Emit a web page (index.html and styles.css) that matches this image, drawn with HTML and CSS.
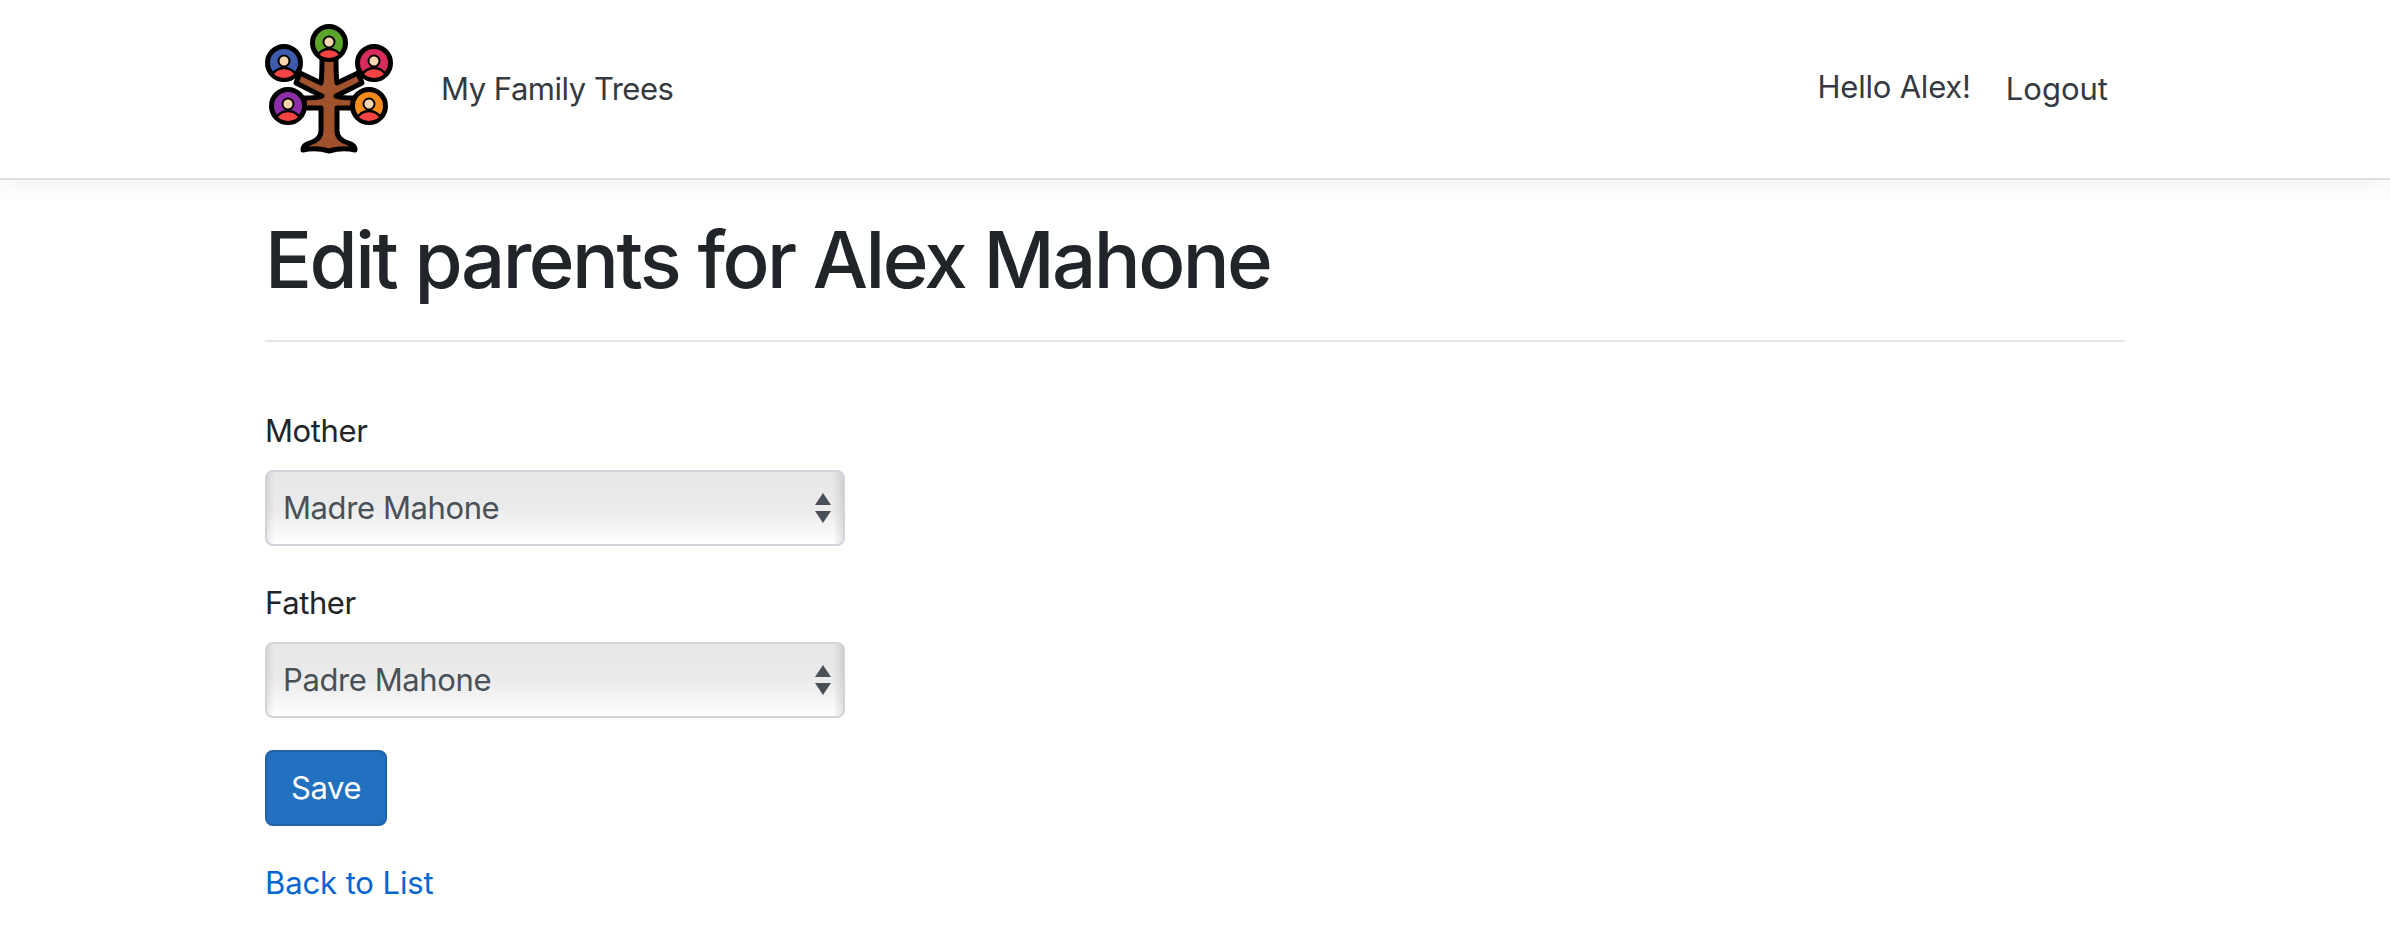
FILE: index.html
```html
<!DOCTYPE html>
<html lang="en">
<head>
<meta charset="utf-8">
<title>Edit parents</title>
<link rel="stylesheet" href="styles.css">
</head>
<body>
<header class="navbar">
  <div class="container nav-inner">
    <a class="brand-logo" href="#" aria-label="Home">
      <svg class="logo" viewBox="262 20 134 136" width="134" height="136">
        <defs>
          <clipPath id="c1"><circle cx="329" cy="42" r="15"/></clipPath>
          <clipPath id="c2"><circle cx="284" cy="62" r="15"/></clipPath>
          <clipPath id="c3"><circle cx="374" cy="62" r="15"/></clipPath>
          <clipPath id="c4"><circle cx="288" cy="105" r="15"/></clipPath>
          <clipPath id="c5"><circle cx="369" cy="105" r="15"/></clipPath>
          <path id="tree" d="M322 55C322 68 322 76 321 82L300 72L296 82L322 95C318 97 312 97 304 97V107H321V130C321 137 316 140 310 142C306 143 303 145 303 149C312 147 322 148 329 150C336 148 346 147 355 149C355 145 352 143 348 142C342 140 337 137 337 130V107H354V97C346 97 340 97 336 95L362 82L358 72L337 82C336 76 336 68 336 55Z"/>
          <g id="bust">
            <circle class="head" cx="0" cy="0" r="5.5"/>
            <path class="body" d="M-13 15C-10 10 -6 7 0 7C6 7 10 10 13 15C10 21 -10 21 -13 15Z"/>
          </g>
        </defs>
        <use href="#tree" class="tree"/>
        <circle class="ring" cx="329" cy="42" r="16.5" fill="#5ca52c"/>
        <circle class="ring" cx="284" cy="62" r="16.5" fill="#3f5bab"/>
        <circle class="ring" cx="374" cy="62" r="16.5" fill="#d72c5c"/>
        <circle class="ring" cx="288" cy="105" r="16.5" fill="#8e2fa8"/>
        <circle class="ring" cx="369" cy="105" r="16.5" fill="#f68c1e"/>
        <g clip-path="url(#c1)"><use href="#bust" x="329" y="41"/></g>
        <g clip-path="url(#c2)"><use href="#bust" x="284" y="60"/></g>
        <g clip-path="url(#c3)"><use href="#bust" x="374" y="60"/></g>
        <g clip-path="url(#c4)"><use href="#bust" x="288" y="103"/></g>
        <g clip-path="url(#c5)"><use href="#bust" x="369" y="103"/></g>
      </svg>
    </a>
    <a class="brand-text" href="#">My Family Trees</a>
    <div class="nav-right">
      <span class="hello">Hello Alex!</span>
      <a class="logout" href="#">Logout</a>
    </div>
  </div>
</header>
<main class="container main">
  <h1 class="title">Edit parents for Alex Mahone</h1>
  <hr class="rule">
  <form class="form">
    <div class="group">
      <label class="label" for="mother">Mother</label>
      <div class="select" id="mother"><span>Madre Mahone</span>
        <svg class="arrows" viewBox="0 0 16 30" width="16" height="30"><path d="M8 0L16 12H0Z"/><path d="M0 18H16L8 30Z"/></svg>
      </div>
    </div>
    <div class="group">
      <label class="label" for="father">Father</label>
      <div class="select" id="father"><span>Padre Mahone</span>
        <svg class="arrows" viewBox="0 0 16 30" width="16" height="30"><path d="M8 0L16 12H0Z"/><path d="M0 18H16L8 30Z"/></svg>
      </div>
    </div>
    <button class="save" type="button">Save</button>
  </form>
  <a class="back" href="#">Back to List</a>
</main>
</body>
</html>
```
FILE: styles.css
```css
* { box-sizing: border-box; }
html, body { margin: 0; height: 100%; overflow: hidden; }
body {
  background: #fff;
  color: #212529;
  font-family: Inter, "Liberation Sans", sans-serif;
  font-size: 31px;
  letter-spacing: -0.4px;
  line-height: 48px;
}
a { text-decoration: none; }
.container { width: 1860px; margin-left: 265px; }
.navbar {
  height: 180px;
  border-bottom: 2px solid #dfe0e4;
  box-shadow: 0 4px 24px rgba(0, 0, 0, 0.06);
}
.nav-inner { display: flex; align-items: center; height: 178px; }
.brand-logo { display: block; margin-left: -3px; height: 136px; }
.logo { display: block; }
.brand-text { margin-left: 45px; color: #343a40; letter-spacing: -0.48px; }
.nav-right { margin-left: auto; margin-right: 17px; display: flex; align-items: center; gap: 35px; color: #343a40; }
.hello { position: relative; top: -2px; letter-spacing: -0.2px; }
.logout { color: #343a40; letter-spacing: 0; }
.tree { fill: #a0522d; stroke: #000; stroke-width: 5; stroke-linejoin: round; }
.ring { stroke: #000; stroke-width: 5; }
.head { fill: #fdd8ae; stroke: #000; stroke-width: 2; }
.body { fill: #f44343; stroke: #000; stroke-width: 2.5; }
.title { margin: 32px 0 0; font-size: 78px; line-height: 96px; font-weight: 500; color: #212529; letter-spacing: -2.55px; }
.rule { margin: 32px 0 0; border: 0; border-top: 2px solid #e3e4e6; }
.form { margin-top: 65px; }
.group { margin-bottom: 33px; }
.group + .group { margin-bottom: 32px; }
.label { display: block; margin-bottom: 15px; color: #212529; }
.select {
  width: 580px;
  height: 76px;
  border: 2px solid #ced4da;
  border-radius: 8px;
  padding: 0 12px 0 16px;
  display: flex;
  align-items: center;
  justify-content: space-between;
  color: #495057;
  background:
    linear-gradient(to right, rgba(0,0,0,.08), transparent 7px, transparent calc(100% - 10px), rgba(0,0,0,.1)),
    linear-gradient(to bottom, #e7e7e7 0, #ebebeb 50%, #f4f4f4 75%, #ffffff 100%);
}
.arrows { fill: #495057; }
.save {
  display: block;
  width: 122px;
  height: 76px;
  padding: 0;
  background: #2270c0;
  border: 2px solid #1f63a8;
  border-radius: 8px;
  color: #fff;
  font: inherit;
  letter-spacing: inherit;
}
.back { display: block; margin-top: 33px; color: #0766d1; letter-spacing: -0.1px; }
```
